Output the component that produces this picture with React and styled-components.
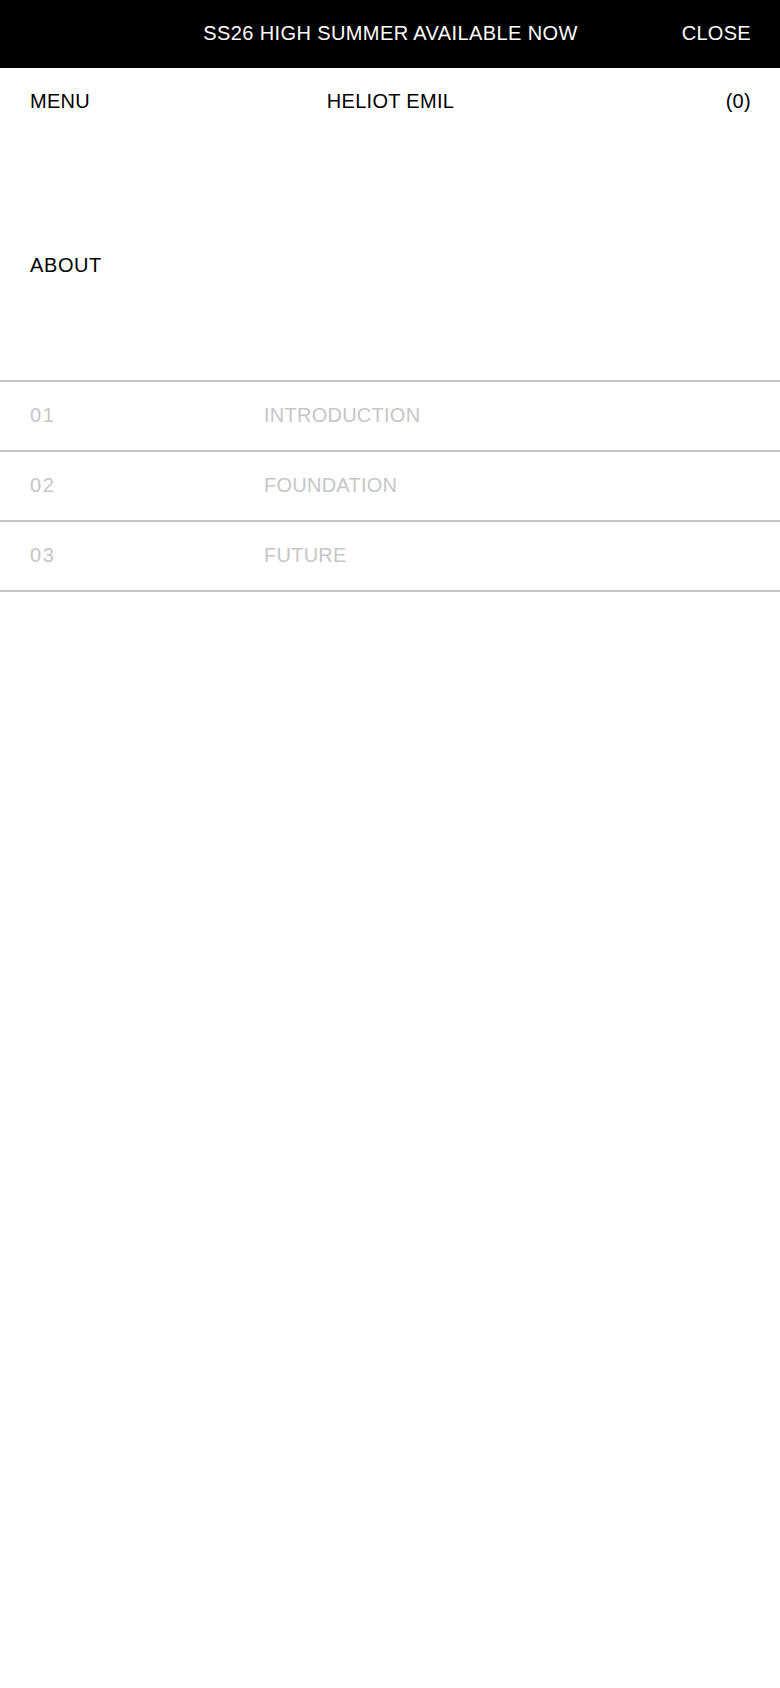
import React from "react";
import styled, { createGlobalStyle } from "styled-components";

const GlobalStyle = createGlobalStyle`
  html, body {
    margin: 0;
    padding: 0;
    background: #ffffff;
  }
  body {
    font-family: "Liberation Sans", Arial, Helvetica, sans-serif;
    font-size: 20px;
    letter-spacing: 0.3px;
    color: #000000;
    -webkit-font-smoothing: antialiased;
  }
  * { box-sizing: border-box; }
`;

const Banner = styled.div`
  height: 68px;
  background: #000000;
  color: #ffffff;
  display: grid;
  grid-template-columns: 1fr auto 1fr;
  align-items: center;
  padding: 0 29px 3px 30px;
  font-size: 20px;
  line-height: 24px;
`;

const BannerText = styled.span`
  grid-column: 2;
  text-transform: uppercase;
  letter-spacing: 0.4px;
`;

const CloseButton = styled.span`
  grid-column: 3;
  justify-self: end;
  cursor: pointer;
`;

const Header = styled.header`
  height: 64px;
  display: grid;
  grid-template-columns: 1fr auto 1fr;
  align-items: center;
  padding: 2px 29px 0 30px;
  font-size: 20px;
  line-height: 24px;
`;

const HeaderItem = styled.span`
  justify-self: ${(p) => p.$align || "start"};
`;

const Intro = styled.section`
  height: 248px;
  padding: 121px 30px 0;
`;

const Heading = styled.h1`
  margin: 0;
  font-size: 20px;
  line-height: 24px;
  font-weight: 400;
  letter-spacing: 0.6px;
`;

const List = styled.ol`
  list-style: none;
  margin: 0;
  padding: 0;
  border-top: 2px solid #c4c4c4;
`;

const Row = styled.li`
  height: 70px;
  border-bottom: 2px solid #c4c4c4;
  display: grid;
  grid-template-columns: 234px 1fr;
  align-items: center;
  padding: 0 30px 3px;
  color: #c6c6c6;
  font-size: 20px;
  line-height: 24px;
`;

const Index = styled.span`
  letter-spacing: 1.6px;
`;

const Title = styled.span`
  letter-spacing: 0.25px;
`;

const sections = [
  { n: "01", title: "INTRODUCTION" },
  { n: "02", title: "FOUNDATION" },
  { n: "03", title: "FUTURE" },
];

export default function App() {
  return (
    <>
      <GlobalStyle />
      <Banner>
        <BannerText>SS26 HIGH SUMMER AVAILABLE NOW</BannerText>
        <CloseButton>CLOSE</CloseButton>
      </Banner>
      <Header>
        <HeaderItem>MENU</HeaderItem>
        <HeaderItem $align="center">HELIOT EMIL</HeaderItem>
        <HeaderItem $align="end">(0)</HeaderItem>
      </Header>
      <Intro>
        <Heading>ABOUT</Heading>
      </Intro>
      <List>
        {sections.map((s) => (
          <Row key={s.n}>
            <Index>{s.n}</Index>
            <Title>{s.title}</Title>
          </Row>
        ))}
      </List>
    </>
  );
}
